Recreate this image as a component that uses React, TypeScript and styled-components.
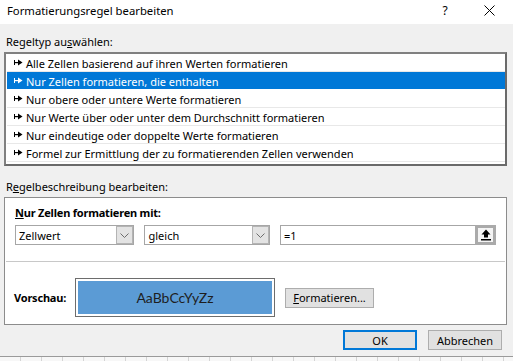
import React from "react";
import styled, { createGlobalStyle } from "styled-components";

const GlobalStyle = createGlobalStyle`
  body {
    margin: 0;
    background: #f0f0f0;
    font-family: "Segoe UI", "Noto Sans", "Open Sans", sans-serif;
  }
`;

const ruleTypes = [
  "Alle Zellen basierend auf ihren Werten formatieren",
  "Nur Zellen formatieren, die enthalten",
  "Nur obere oder untere Werte formatieren",
  "Nur Werte über oder unter dem Durchschnitt formatieren",
  "Nur eindeutige oder doppelte Werte formatieren",
  "Formel zur Ermittlung der zu formatierenden Zellen verwenden",
];

const RuleArrow = ({ color }: { color: string }) => (
  <svg width="9" height="7" viewBox="0 0 9 7">
    <rect x="0" y="1" width="1" height="5" fill={color} />
    <rect x="0" y="3" width="5" height="1.2" fill={color} />
    <polygon points="4,0.5 8.5,3.5 4,6.5" fill={color} />
  </svg>
);

const Chevron = () => (
  <svg width="9" height="5" viewBox="0 0 9 5">
    <polyline points="0.5,0.5 4.5,4.5 8.5,0.5" fill="none" stroke="#6d6d6d" strokeWidth="1" />
  </svg>
);

const UploadIcon = () => (
  <svg width="10" height="12" viewBox="0 0 10 12">
    <polygon points="5,0.5 9.5,5.5 7,5.5 7,8.5 3,8.5 3,5.5 0.5,5.5" fill="#000" />
    <rect x="0" y="10" width="10" height="1.5" fill="#000" />
  </svg>
);

const CloseIcon = () => (
  <svg width="11" height="11" viewBox="0 0 11 11">
    <line x1="0.5" y1="0.5" x2="10.5" y2="10.5" stroke="#000" strokeWidth="1" />
    <line x1="10.5" y1="0.5" x2="0.5" y2="10.5" stroke="#000" strokeWidth="1" />
  </svg>
);

const Combo = ({ value }: { value: string }) => (
  <StCombo>
    <span>{value}</span>
    <StComboButton>
      <Chevron />
    </StComboButton>
  </StCombo>
);

const App = () => {
  const selected = 1;

  return (
    <>
      <GlobalStyle />
      <StDialog>
        <StTitleBar>
          <StTitle>Formatierungsregel bearbeiten</StTitle>
          <StHelp>?</StHelp>
          <StClose>
            <CloseIcon />
          </StClose>
        </StTitleBar>

        <StBody>
          <StSectionLabel $top={10}>
            Regeltyp au<u>s</u>wählen:
          </StSectionLabel>
          <StList>
            {ruleTypes.map((rule, i) => (
              <StRuleRow key={rule} $active={i === selected}>
                <RuleArrow color={i === selected ? "#fff" : "#000"} />
                <span>{rule}</span>
              </StRuleRow>
            ))}
          </StList>

          <StSectionLabel $top={13}>
            R<u>e</u>gelbeschreibung bearbeiten:
          </StSectionLabel>
          <StDescBox>
            <StCriteria>
              <StBoldLabel>
                <u>N</u>ur Zellen formatieren mit:
              </StBoldLabel>
              <StFieldRow>
                <Combo value="Zellwert" />
                <Combo value="gleich" />
                <StInput>
                  <StInputText>=1</StInputText>
                  <StRefButton>
                    <UploadIcon />
                  </StRefButton>
                </StInput>
              </StFieldRow>
            </StCriteria>
            <StPreviewRow>
              <StPreviewLabel>Vorschau:</StPreviewLabel>
              <StPreviewFrame>
                <StPreviewFill>AaBbCcYyZz</StPreviewFill>
              </StPreviewFrame>
              <StButton $width={89}>
                <u>F</u>ormatieren...
              </StButton>
            </StPreviewRow>
          </StDescBox>

          <StFooter>
            <StButton $width={74} $primary>
              OK
            </StButton>
            <StButton $width={74}>Abbrechen</StButton>
          </StFooter>
        </StBody>
        <StSheetStrip />
      </StDialog>
    </>
  );
};

export default App;

const StDialog = styled.div`
  width: 513px;
  height: 361px;
  background: #f0f0f0;
  display: flex;
  flex-direction: column;
  overflow: hidden;
  color: #000;
  font-size: 11px;
`;

const StTitleBar = styled.div`
  height: 24px;
  background: #fff;
  display: flex;
  align-items: center;
  padding-left: 7px;
`;

const StTitle = styled.div`
  flex: 1;
  font-size: 11.3px;
  margin-top: -4px;
`;

const StHelp = styled.div`
  width: 12px;
  text-align: center;
  font-size: 12px;
  margin-right: 33px;
  margin-top: -4px;
`;

const StClose = styled.div`
  display: flex;
  margin-right: 18px;
  margin-top: -4px;
`;

const StBody = styled.div`
  flex: 1;
  display: flex;
  flex-direction: column;
  padding: 0 6px 0 4px;
`;

const StSectionLabel = styled.div<{ $top: number }>`
  height: 16px;
  line-height: 16px;
  margin-top: ${(p) => p.$top}px;
  margin-left: 2px;
  margin-bottom: 2px;
`;

const StList = styled.div`
  border: 2px solid #808080;
  border-right-color: #6a6a6a;
  border-bottom-color: #6a6a6a;
  background: #fff;
  padding: 0 0 2px 1px;
  box-sizing: border-box;
  height: 114px;
`;

const StRuleRow = styled.div<{ $active: boolean }>`
  height: 17px;
  border-bottom: 1px solid ${(p) => (p.$active ? "#fff" : "#e8e8e8")};
  display: flex;
  align-items: center;
  gap: 3px;
  padding-left: 7px;
  background: ${(p) => (p.$active ? "#0078d7" : "#fff")};
  color: ${(p) => (p.$active ? "#fff" : "#000")};
  white-space: nowrap;

  span {
    margin-top: 1px;
  }
`;

const StDescBox = styled.div`
  border: 1px solid #8c8c8c;
  background: #fff;
  height: 128px;
  box-sizing: border-box;
  display: flex;
  flex-direction: column;
`;

const StCriteria = styled.div`
  padding: 7px 9px 0;
  height: 64px;
  box-sizing: border-box;
  border-bottom: 1px solid #c8c8c8;
  margin: 0 1px;
`;

const StBoldLabel = styled.div`
  font-weight: 700;
  letter-spacing: -0.2px;
  height: 16px;
  line-height: 16px;
  margin-bottom: 4px;
`;

const StFieldRow = styled.div`
  display: flex;
  gap: 10px;
`;

const StCombo = styled.div`
  width: 120px;
  height: 20px;
  box-sizing: border-box;
  border: 1px solid #a6a6a6;
  display: flex;
  align-items: center;
  justify-content: space-between;
  padding-left: 3px;

  &:nth-child(2) {
    width: 126px;
  }
`;

const StComboButton = styled.div`
  width: 17px;
  height: 18px;
  box-sizing: border-box;
  background: #e3e3e3;
  border: 1px solid #b4b4b4;
  display: flex;
  align-items: center;
  justify-content: center;
`;

const StInput = styled.div`
  width: 217px;
  height: 20px;
  box-sizing: border-box;
  border: 1px solid #a6a6a6;
  display: flex;
  align-items: center;
  justify-content: space-between;
`;

const StInputText = styled.span`
  padding-left: 3px;
`;

const StRefButton = styled.div`
  width: 21px;
  height: 20px;
  margin: -1px -1px -1px 0;
  box-sizing: border-box;
  border: 3px solid #aaaaaa;
  background: #f4f4f4;
  display: flex;
  align-items: center;
  justify-content: center;
`;

const StPreviewRow = styled.div`
  display: flex;
  align-items: center;
  padding: 16px 9px 0;
`;

const StPreviewLabel = styled.div`
  width: 61px;
  font-weight: 700;
  letter-spacing: -0.2px;
`;

const StPreviewFrame = styled.div`
  width: 200px;
  height: 39px;
  box-sizing: border-box;
  border: 1px solid #6d6d6d;
  padding: 2px;
  background: #fff;
  margin-right: 10px;
`;

const StPreviewFill = styled.div`
  height: 100%;
  background: #5b9bd5;
  display: flex;
  align-items: center;
  justify-content: center;
  font-family: Lato, "Open Sans", sans-serif;
  font-size: 14px;
  color: #1e1e1e;
`;

const StButton = styled.div<{ $width: number; $primary?: boolean }>`
  width: ${(p) => p.$width}px;
  height: 20px;
  box-sizing: border-box;
  background: #e1e1e1;
  border: ${(p) => (p.$primary ? "2px solid #0078d7" : "1px solid #adadad")};
  display: flex;
  align-items: center;
  justify-content: center;
`;

const StFooter = styled.div`
  display: flex;
  justify-content: flex-end;
  gap: 11px;
  margin-top: 5px;
  padding-right: 5px;
`;

const StSheetStrip = styled.div`
  height: 4px;
  border-top: 1px solid #9a9a9a;
  background: repeating-linear-gradient(
    to right,
    #f7f7f7 0,
    #f7f7f7 20px,
    #d4d4d4 20px,
    #d4d4d4 21px
  );
`;
